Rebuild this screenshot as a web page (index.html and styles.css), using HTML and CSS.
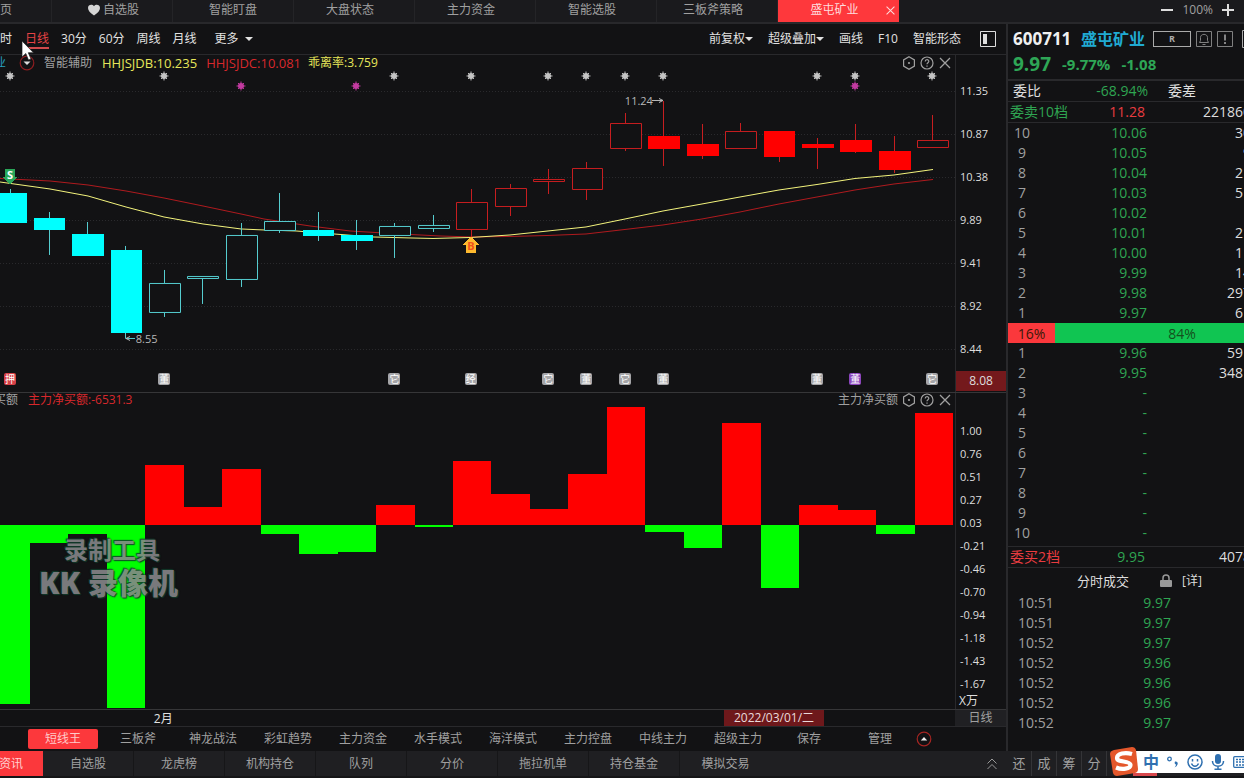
FILE: index.html
```html
<!DOCTYPE html>
<html lang="zh-CN">
<head>
<meta charset="utf-8">
<title>盛屯矿业 600711</title>
<link rel="stylesheet" href="styles.css">
</head>
<body>
<svg class="defs" aria-hidden="true">
  <symbol id="star" viewBox="-5 -5 10 10"><path d="M0-4.500V4.500M-4.500 0H4.500M-3-3L3 3M3-3L-3 3" stroke="currentColor" stroke-width="1"/><circle r="3" fill="currentColor"/></symbol>
  <symbol id="hex" viewBox="0 0 14 14"><path d="M7 .8l5.400 3.100v6.200L7 13.200 1.600 10.100V3.900z" fill="none" stroke="currentColor" stroke-width="1.200"/><circle cx="7" cy="7" r="1.100" fill="currentColor"/></symbol>
  <symbol id="help" viewBox="0 0 14 14"><circle cx="7" cy="7" r="6" fill="none" stroke="currentColor" stroke-width="1.200"/><path d="M5.200 5.600C5.200 3 8.900 3.200 8.800 5.400 8.700 6.700 7 6.700 7 8.300M7 9.500v1.300" fill="none" stroke="currentColor" stroke-width="1.200"/></symbol>
  <symbol id="cross" viewBox="0 0 14 14"><path d="M2 2l10 10M12 2L2 12" fill="none" stroke="currentColor" stroke-width="1.300"/></symbol>
</svg>

<header class="tabs">
  <nav class="tab-list">
    <a class="tab first" href="#">页</a>
    <a class="tab favourites" href="#"><svg class="heart" viewBox="0 0 12 12"><path d="M6 11.500C2 8.500 0 6.500 0 3.900 0 .6 4.300-.2 6 2.300 7.700-.2 12 .6 12 3.900 12 6.500 10 8.500 6 11.500z" fill="#d5d5d5"/></svg>自选股</a>
    <a class="tab" href="#">智能盯盘</a>
    <a class="tab closable" href="#">大盘状态</a>
    <a class="tab closable" href="#">主力资金</a>
    <a class="tab closable" href="#">智能选股</a>
    <a class="tab closable" href="#">三板斧策略</a>
    <a class="tab closable active" href="#">盛屯矿业<svg class="tab-close" viewBox="0 0 14 14"><use href="#cross"/></svg></a>
  </nav>
  <div class="zoom">
    <button aria-label="缩小"><svg width="12" height="12"><path d="M0 6H12" stroke="#ddd" stroke-width="2"/></svg></button>
    <span>100%</span>
    <button aria-label="放大"><svg width="12" height="12"><path d="M0 6H12M6 0V12" stroke="#ddd" stroke-width="2"/></svg></button>
  </div>
</header>

<main class="workspace">
  <section class="chart">
    <div class="toolbar">
      <div class="periods">
        <button>时</button>
        <button class="current">日线</button>
        <button>30分</button>
        <button>60分</button>
        <button>周线</button>
        <button>月线</button>
        <button class="more">更多<i class="caret"></i></button>
      </div>
      <div class="tools">
        <button>前复权<i class="caret"></i></button>
        <button>超级叠加<i class="caret"></i></button>
        <button>画线</button>
        <button>F10</button>
        <button>智能形态</button>
        <button class="dock" aria-label="侧栏"><svg width="16" height="16"><path d="M.5.5H15.500V15.500H.5z" fill="none" stroke="#ddd"/><path d="M3 3H7V13H3z" fill="#ddd"/></svg></button>
      </div>
      <svg class="cursor" viewBox="0 0 12 20"><path d="M0 0V16L3.800 12.500 6.500 19 9 18 6.300 11.700H11.500z" fill="#fff" stroke="#222" stroke-width=".7"/></svg>
    </div>

    <div class="pane pane-price">
      <div class="plot">
        <svg class="drawing" viewBox="0 55 955 337" preserveAspectRatio="none">
          <path class="grid" d="M0 91.500H955M0 134.500H955M0 177.500H955M0 220.500H955M0 263.500H955M0 306.500H955M0 349.500H955"/>
          <path class="ma-slow" d="M0 178.500L50 181 88 185 126 191 164 198 203 206 241 214 264 219 310 226 350 231 400 234 440 236 471 237 510 236.500 548 235.500 586 234 625 229.500 663 225 702 219 740 212 779 204 817 197 855 190 894 184 933 179.500"/>
          <path class="ma-fast" d="M0 182L50 189 88 196 126 207 164 217 203 224 241 229 264 230 296 231 334 234 373 237 411 238 433 238.500 471 237.500 510 235 548 231 586 227 625 219 663 211 702 204 740 197 779 190 817 184.500 855 178.500 894 175 933 169.500"/>
          <g class="down">
            <path d="M10.500 189V193M49.500 212V255M87.500 222V234M125.500 246V338.500H135M164.500 270V283M164.500 313V317M202.500 279V304M241.500 223V235M241.500 280V287M279.500 193V221M279.500 231V233M318.500 212V241M356.500 220V250M394.500 223V226M394.500 236V258M433.500 215V225M433.500 228V232"/>
            <path class="solid" d="M0 193H27V223H0zM34 218H65V230H34zM72 234H104V256H72zM111 250H142V333H111zM303 230H334V236H303zM341 235H373V241H341z"/>
            <path class="hollow" d="M149.500 283.500H180.500V312.500H149.500zM187.500 276.500H218.500V278.500H187.500zM226.500 235.500H257.500V279.500H226.500zM264.500 221.500H295.500V230.500H264.500zM379.500 226.500H410.500V235.500H379.500zM418.500 225.500H449.500V228.500H418.500z"/>
          </g>
          <g class="up">
            <path d="M471.500 189V202M471.500 230V238M510.500 184V188M510.500 207V216M548.500 169V194M586.500 162V168M586.500 190V200M625.500 113V123M625.500 149V151M663.500 101V166M702.500 124V159M740.500 123V131M779.500 131V162M817.500 138V169M855.500 124V153M894.500 136V173M932.500 115V140"/>
            <path class="solid" d="M648 136H680V149H648zM687 144H719V156H687zM764 131H795V157H764zM802 144H834V148H802zM840 140H872V152H840zM879 151H911V170H879z"/>
            <path class="hollow" d="M456.500 202.500H487.500V229.500H456.500zM495.500 188.500H526.500V206.500H495.500zM533.500 179.500H564.500V181.500H533.500zM572.500 168.500H602.500V189.500H572.500zM610.500 123.500H641.500V148.500H610.500zM725.500 131.500H756.500V148.500H725.500zM917.500 140.500H948.500V147.500H917.500z"/>
          </g>
          <path d="M130 336.500L126 338.500 130 340.500M652 100.500H663M659 98.500L663 100.500 659 102.500" fill="none" stroke="#bbb"/>
          <path d="M5 169H15V177H18L10 184 2 177H5z" fill="#2aa75a"/>
          <path d="M471 237L479 245H476V253H466V245H463z" fill="#fdb92e"/>
          <g color="#c4c4c4">
            <use href="#star" x="5" y="71" width="10" height="10"/><use href="#star" x="159" y="71" width="10" height="10"/><use href="#star" x="389" y="71" width="10" height="10"/><use href="#star" x="466" y="71" width="10" height="10"/><use href="#star" x="543" y="71" width="10" height="10"/><use href="#star" x="581" y="71" width="10" height="10"/><use href="#star" x="620" y="71" width="10" height="10"/><use href="#star" x="658" y="71" width="10" height="10"/><use href="#star" x="812" y="71" width="10" height="10"/><use href="#star" x="850" y="71" width="10" height="10"/><use href="#star" x="927" y="71" width="10" height="10"/>
          </g>
          <g color="#c23aa0">
            <use href="#star" x="236" y="81" width="10" height="10"/><use href="#star" x="351" y="81" width="10" height="10"/><use href="#star" x="850" y="81" width="10" height="10"/>
          </g>
        </svg>
        <div class="legend">
          <span class="stock-name">盛屯矿业</span>
          <svg class="round-caret" viewBox="0 0 16 16"><circle cx="8" cy="8" r="6.800" fill="none" stroke="#8d1d20" stroke-width="1.200"/><path d="M4.500 6.500H11.500L8 10z" fill="#ddd"/></svg>
          <span>智能辅助</span>
          <span class="series yellow">HHJSJDB:10.235</span>
          <span class="series red">HHJSJDC:10.081</span>
          <span class="yellow">乖离率:3.759</span>
          <span class="pane-tools">
            <button aria-label="设置"><svg><use href="#hex"/></svg></button><button aria-label="帮助"><svg><use href="#help"/></svg></button><button aria-label="关闭"><svg><use href="#cross"/></svg></button>
          </span>
        </div>
        <span class="mark" style="left:66.900%;top:13.600%"><b class="extreme high">11.24</b></span>
        <span class="mark" style="left:14.200%;top:84.400%"><b class="extreme low">8.55</b></span>
        <span class="mark" style="left:1.050%;top:35.600%"><b class="signal sell">S</b></span>
        <span class="mark" style="left:49.300%;top:56.800%"><b class="signal buy">B</b></span>
        <span class="mark" style="left:1.050%;top:96.100%"><b class="event pledge">押</b></span>
        <span class="mark" style="left:17.200%;top:96.100%"><b class="event">董</b></span>
        <span class="mark" style="left:41.300%;top:96.100%"><b class="event">它</b></span>
        <span class="mark" style="left:49.300%;top:96.100%"><b class="event">经</b></span>
        <span class="mark" style="left:57.400%;top:96.100%"><b class="event">它</b></span>
        <span class="mark" style="left:61.400%;top:96.100%"><b class="event">董</b></span>
        <span class="mark" style="left:65.450%;top:96.100%"><b class="event">它</b></span>
        <span class="mark" style="left:69.450%;top:96.100%"><b class="event">董</b></span>
        <span class="mark" style="left:85.550%;top:96.100%"><b class="event">董</b></span>
        <span class="mark" style="left:89.550%;top:96.100%"><b class="event special">董</b></span>
        <span class="mark" style="left:97.600%;top:96.100%"><b class="event">它</b></span>
      </div>
      <ul class="axis price-axis">
        <li>11.35</li><li>10.87</li><li>10.38</li><li>9.89</li><li>9.41</li><li>8.92</li><li>8.44</li>
        <li class="cursor-price">8.08</li>
      </ul>
    </div>

    <div class="pane pane-flow">
      <div class="plot">
        <svg class="drawing" viewBox="0 393 955 316" preserveAspectRatio="none">
          <path fill="#f00" d="M145 525V465H184V507H222V469H261V525zM376 525V505H415V525zM453 525V461H491V494H530V509H568V474H607V407H645V525zM722 525V423H761V525zM799 525V505H838V510H876V525zM915 525V413H953V525z"/>
          <path fill="#0f0" d="M0 525V704H30V543H68V534H107V708H145V525zM261 525V534H299V554H338V552H376V525zM415 525V527H453V525zM645 525V532H684V548H722V525zM761 525V588H799V525zM876 525V534H915V525z"/>
        </svg>
        <div class="legend">
          <span class="clipped">买额</span>
          <span class="red">主力净买额:-6531.3</span>
          <span class="pane-tools">
            <span>主力净买额</span><button aria-label="设置"><svg><use href="#hex"/></svg></button><button aria-label="帮助"><svg><use href="#help"/></svg></button><button aria-label="关闭"><svg><use href="#cross"/></svg></button>
          </span>
        </div>
        <div class="watermark"><span>录制工具</span><strong>KK 录像机</strong></div>
      </div>
      <ul class="axis flow-axis">
        <li>1.00</li><li>0.76</li><li>0.51</li><li>0.27</li><li>0.03</li><li>-0.21</li><li>-0.46</li><li>-0.70</li><li>-0.94</li><li>-1.18</li><li>-1.43</li><li>-1.67</li>
        <li class="unit">X万</li>
      </ul>
    </div>

    <div class="dates">
      <div class="plot">
        <span class="mark" style="left:17.100%;top:50%"><b class="month">2月</b></span>
        <span class="mark" style="left:81.050%;top:50%"><b class="day">2022/03/01/二</b></span>
      </div>
      <span class="period">日线</span>
    </div>

    <nav class="strategies">
      <button class="selected">短线王</button>
      <button>三板斧</button>
      <button>神龙战法</button>
      <button>彩虹趋势</button>
      <button>主力资金</button>
      <button>水手模式</button>
      <button>海洋模式</button>
      <button>主力控盘</button>
      <button>中线主力</button>
      <button>超级主力</button>
      <button class="save">保存</button>
      <button>管理</button>
      <button class="collapse" aria-label="收起"><svg class="round-caret" viewBox="0 0 16 16"><circle cx="8" cy="8" r="6.800" fill="none" stroke="#a62522" stroke-width="1.200"/><path d="M4.800 9.500H11.200L8 6z" fill="#eee"/></svg></button>
    </nav>
  </section>

  <aside class="quote">
    <div class="quote-head">
      <div class="title">
        <strong class="code">600711</strong>
        <strong class="name">盛屯矿业</strong>
        <button class="tag">R</button>
        <button class="square" aria-label="提醒"><svg width="16" height="16" fill="none" stroke="#808080"><path d="M.5.5H15.500V15.500H.5z"/><path d="M3.500 11.500H12.500L11.500 9.500V6.500C11.500 2.300 4.500 2.300 4.500 6.500V9.500zM6.500 13.500H9.500"/></svg></button>
        <button class="square" aria-label="公告"><svg width="16" height="16" fill="none" stroke="#808080"><path d="M.5.5H15.500V15.500H.5z"/><path d="M8 3.500V9.500M8 11V13" stroke="#aaa" stroke-width="1.500"/></svg></button>
        <button class="square edge" aria-label="更多"><svg width="16" height="18"><path d="M.5.5H15.500V17.500H.5z" fill="none" stroke="#aaa"/></svg></button>
      </div>
      <div class="price"><strong>9.97</strong><b>-9.77%</b><b>-1.08</b></div>
    </div>
    <div class="summary"><span>委比</span><span class="green">-68.94%</span><span class="diff">委差</span></div>
    <div class="summary total"><span class="green">委卖10档</span><span class="red">11.28</span><span class="volume">221860</span></div>
    <table class="book">
      <tr><th>10</th><td>10.06</td><td>30</td></tr>
      <tr><th>9</th><td>10.05</td><td>9</td></tr>
      <tr><th>8</th><td>10.04</td><td>21</td></tr>
      <tr><th>7</th><td>10.03</td><td>51</td></tr>
      <tr><th>6</th><td>10.02</td><td></td></tr>
      <tr><th>5</th><td>10.01</td><td>21</td></tr>
      <tr><th>4</th><td>10.00</td><td>11</td></tr>
      <tr><th>3</th><td>9.99</td><td>14</td></tr>
      <tr><th>2</th><td>9.98</td><td>297</td></tr>
      <tr><th>1</th><td>9.97</td><td>61</td></tr>
    </table>
    <div class="ratio"><span class="sell-share">16%</span><span class="buy-share">84%</span></div>
    <table class="book">
      <tr><th>1</th><td>9.96</td><td>591</td></tr>
      <tr><th>2</th><td>9.95</td><td>3481</td></tr>
      <tr><th>3</th><td>-</td><td></td></tr>
      <tr><th>4</th><td>-</td><td></td></tr>
      <tr><th>5</th><td>-</td><td></td></tr>
      <tr><th>6</th><td>-</td><td></td></tr>
      <tr><th>7</th><td>-</td><td></td></tr>
      <tr><th>8</th><td>-</td><td></td></tr>
      <tr><th>9</th><td>-</td><td></td></tr>
      <tr><th>10</th><td>-</td><td></td></tr>
    </table>
    <div class="summary total bids"><span class="red">委买2档</span><span class="green">9.95</span><span class="volume">4078</span></div>
    <div class="ticks-head">
      <span>分时成交</span>
      <svg width="12" height="14" viewBox="0 0 12 14"><path d="M3 7V4C3 0 9 0 9 4V7" fill="none" stroke="#999" stroke-width="1.500"/><rect y="6" width="12" height="7" rx="1" fill="#999"/></svg>
      <a href="#">[详]</a>
    </div>
    <table class="ticks">
      <tr><td>10:51</td><td>9.97</td></tr>
      <tr><td>10:51</td><td>9.97</td></tr>
      <tr><td>10:52</td><td>9.97</td></tr>
      <tr><td>10:52</td><td>9.96</td></tr>
      <tr><td>10:52</td><td>9.96</td></tr>
      <tr><td>10:52</td><td>9.96</td></tr>
      <tr><td>10:52</td><td>9.97</td></tr>
    </table>
  </aside>
</main>

<footer class="bottom">
  <nav class="bottom-nav">
    <a class="news" href="#">资讯</a>
    <a href="#">自选股</a>
    <a href="#">龙虎榜</a>
    <a href="#">机构持仓</a>
    <a href="#">队列</a>
    <a href="#">分价</a>
    <a href="#">拖拉机单</a>
    <a href="#">持仓基金</a>
    <a href="#">模拟交易</a>
  </nav>
  <button class="expand" aria-label="展开"><svg width="10" height="12" fill="none" stroke="#999"><path d="M.5 5.500L5 1 9.500 5.500M.5 11L5 6.500 9.500 11"/></svg></button>
  <nav class="side-nav">
    <a href="#">还</a><a href="#">成</a><a href="#">筹</a><a href="#">分</a>
  </nav>
  <div class="ime">
    <svg class="ime-logo" viewBox="0 0 28 30"><path d="M4 3L22 0Q25 0 26 3L28 22Q28 25 25 26L7 29Q4 29 3 26L0 7Q0 4 4 3z" fill="#e4572b"/><path d="M22 7C15 5 7 6.500 7 11 7 16 20 13 20.500 18 20.500 22 12 23 6 20.500" fill="none" stroke="#fff" stroke-width="4.200"/></svg>
    <div class="ime-bar">
      <b>中</b>
      <svg width="12" height="14"><circle cx="2.500" cy="4" r="1.800" fill="none" stroke="#2f70b0" stroke-width="1.300"/><path d="M8 6.500Q11.500 6 10.500 9.500 10 11.500 7.500 12.500 9 11 9 9.500 7 9 8 6.500z" fill="#2f70b0"/></svg>
      <svg width="16" height="16" fill="none" stroke="#2f70b0" stroke-width="1.500"><circle cx="8" cy="8" r="7"/><path d="M4.500 9.500C6 13 10 13 11.500 9.500M5.500 5V7.500M10.500 5V7.500"/></svg>
      <svg width="14" height="16"><rect x="4" width="6" height="10" rx="3" fill="#2f70b0"/><path d="M1.500 7C1.500 14 12.500 14 12.500 7M7 12V15M3.500 15.200H10.500" fill="none" stroke="#2f70b0" stroke-width="1.500"/></svg>
      <svg width="18" height="12"><rect x=".7" y=".7" width="16.600" height="10.600" rx="1" fill="none" stroke="#2f70b0" stroke-width="1.300"/><path d="M3 3.500H15M3 6H15M3 9H15" stroke="#2f70b0" stroke-width="1.500" stroke-dasharray="2 1"/></svg>
    </div>
    <i class="ime-underline"></i>
  </div>
</footer>
</body>
</html>
```

FILE: styles.css
```css
* { box-sizing: border-box; }

body {
  margin: 0;
  min-height: 100vh;
  display: flex;
  flex-direction: column;
  background: #121214;
  color: #a0a0a0;
  font: 12px/16px "Open Sans", "Noto Sans CJK SC", sans-serif;
  white-space: nowrap;
  overflow: hidden;
}

button {
  padding: 0;
  border: 0;
  background: none;
  color: inherit;
  font: inherit;
}

a { color: inherit; text-decoration: none; }
ul { margin: 0; padding: 0; list-style: none; }
svg { display: block; }
.defs { position: absolute; width: 0; height: 0; }
.red { color: #d8282c; }
.green { color: #2fa552; }
.yellow { color: #e6e65a; }

/* Top tabs */
.tabs {
  display: flex;
  justify-content: space-between;
  height: 24px;
  background: #1a1a1d;
  border-bottom: 2px solid #28282b;
}
.tab-list { display: flex; }
.tab {
  position: relative;
  display: flex;
  align-items: center;
  justify-content: center;
  gap: 3px;
  width: 121px;
  padding-bottom: 3px;
  border-right: 1px solid #242427;
}
.tab.first { width: 52px; justify-content: flex-start; }
.tab.favourites { padding-left: 3px; }
.tab.closable { padding-right: 8px; }
.tab.active { background: #fe383c; color: #ffdcdc; border: 0; }
.heart { width: 12px; height: 12px; }
.tab-close { position: absolute; right: 3px; top: 5px; width: 11px; height: 11px; }
.zoom { display: flex; align-items: center; gap: 9px; padding: 0 10px 3px; }

/* Workspace */
.workspace { flex: 1; display: flex; min-height: 0; }
.chart { flex: 1; min-width: 0; display: flex; flex-direction: column; }

.toolbar {
  position: relative;
  display: flex;
  justify-content: space-between;
  align-items: center;
  height: 31px;
  padding-right: 10px;
  border-bottom: 1px solid #29292c;
  color: #e2e2e2;
}
.periods, .tools { display: flex; align-items: center; }
.periods { gap: 12px; }
.tools { gap: 15px; }
.toolbar button { display: flex; align-items: center; height: 22px; }
.toolbar .dock { margin-left: 4px; }
.periods .current { margin-left: 1px; color: #e64245; box-shadow: 0 2px #cf4a4c, 5px 2px #cf4a4c; background: #121214; }
.more { margin-left: 6px; gap: 6px; }
.caret { border: 4px solid transparent; border-top-color: #e2e2e2; border-bottom: 0; }
.cursor { position: absolute; left: 22px; top: 17px; width: 12px; height: 20px; z-index: 2; }
.periods .current { height: 20px; box-shadow: none; border-bottom: 2px solid #cf4a4c; border-top: 2px solid transparent; }

.pane { display: flex; min-height: 0; border-bottom: 1px solid #363638; }
.pane-price { flex: 338 1 0; }
.pane-flow { flex: 317 1 0; }
.plot { position: relative; flex: 1; min-width: 0; }
.drawing { position: absolute; inset: 0; width: 100%; height: 100%; shape-rendering: crispEdges; }
.drawing use { shape-rendering: auto; }
.grid { stroke: #2b2b2e; stroke-dasharray: 1 2; }
.ma-slow { fill: none; stroke: #b01a1e; }
.ma-fast { fill: none; stroke: #f4f47c; }
.down { fill: none; stroke: #55cdd0; }
.down .solid { fill: #0ff; stroke: none; }
.up { fill: none; stroke: #c81e20; }
.up .solid { fill: #f00; stroke: none; }
.down .hollow, .up .hollow { fill: #121214; }

.legend { position: relative; display: flex; align-items: center; gap: 10px; height: 16px; }
.pane-flow .legend { height: 14px; }
.stock-name { width: 6px; direction: rtl; overflow: hidden; color: #27a0c0; }
.round-caret { width: 16px; height: 16px; }
.legend .round-caret { margin: 0 -1px 0 3px; }
.series { font-size: 13px; }
.series.yellow { margin-right: -1px; }
.series.red { margin-right: -3px; }
.clipped { width: 18px; direction: rtl; overflow: hidden; }
.pane-tools { display: flex; align-items: center; gap: 4px; margin-left: auto; padding-right: 3px; }
.pane-tools svg { width: 14px; height: 14px; }

/* Zero-size anchors placed at a data point, with a centred label */
.mark { position: absolute; display: flex; align-items: center; justify-content: center; width: 0; height: 0; }
.mark b { flex: none; font-weight: 400; }
.extreme { color: #b8b8b8; font-size: 11px; }
.extreme.low { padding-left: 22px; }
.signal { font-size: 11px; }
.mark .signal { font-weight: 700; }
.signal.sell { color: #fff; }
.signal.buy { color: #f0501c; }
.event { width: 12px; height: 12px; border-radius: 2px; background: #a5a5a8; color: #fff; font-size: 10px; line-height: 12px; text-align: center; overflow: hidden; }
.event.pledge { background: #d64046; }
.event.special { background: #8b46bd; }

.axis { display: flex; flex-direction: column; width: 51px; border-left: 1px solid #29292c; color: #dedede; font-size: 11px; }
.axis li { padding-left: 4px; }
.price-axis { padding-top: 14px; }
.price-axis li { line-height: 43px; }
.price-axis .cursor-price { margin: auto 0 1px; padding: 0; background: #74191c; text-align: center; font-size: 12px; line-height: 20px; }
.flow-axis { padding-top: 26px; }
.flow-axis li { line-height: 23px; }
.flow-axis .unit { font-size: 12px; line-height: 12px; padding-left: 3px; }

.watermark {
  position: absolute;
  left: 39px;
  top: 140px;
  display: flex;
  flex-direction: column;
  color: #858588;
  font-weight: 700;
  text-shadow: 0 0 2px #123d2c, 1px 1px 1px #123d2c, -1px -1px 1px #123d2c;
  opacity: .9;
}
.watermark span { padding-left: 25px; font-size: 24px; line-height: 34px; }
.watermark strong { font-size: 30px; line-height: 32px; }

.dates { display: flex; height: 17px; border-bottom: 1px solid #29292c; }
.month { padding-top: 2px; color: #e2e2e2; }
.day { width: 100px; background: #6e181b; color: #eadada; text-align: center; }
.period { width: 51px; background: #202023; text-align: center; }

.strategies { display: flex; align-items: center; gap: 5px; height: 24px; padding-left: 28px; }
.strategies button { width: 70px; height: 20px; }
.strategies .selected { border-radius: 2px; background: #fc383c; color: #ffcaca; }
.strategies .save { width: 62px; }
.strategies .collapse { width: 16px; height: 16px; margin-left: -4px; }

/* Quote panel */
.quote { width: 238px; border-left: 2px solid #29292c; overflow: hidden; font-size: 14px; line-height: 20px; }
.quote-head { height: 57px; border-bottom: 2px solid #29292c; }
.title { display: flex; align-items: center; height: 30px; padding-left: 5px; }
.code { flex: none; width: 68px; color: #f0f0f0; font-size: 17px; }
.name { flex: none; width: 72px; color: #20aad2; font-size: 16px; }
.tag { flex: none; width: 38px; height: 16px; margin-right: 5px; border: 1px solid #aaa; color: #aaa; font-size: 9px; font-weight: 700; line-height: 14px; }
.square { flex: none; margin-right: 5px; }
.edge { margin-left: 4px; }
.price { display: flex; align-items: center; gap: 11px; padding-left: 5px; color: #2ea656; font-size: 15px; }
.price strong { font-size: 19px; }

.summary { display: grid; grid-template-columns: 60px 75px 1fr; height: 21px; padding-left: 5px; border-bottom: 1px solid #29292c; color: #dedede; }
.summary span:nth-child(2) { text-align: right; }
.summary .diff { padding-left: 20px; }
.total { padding-left: 2px; margin-right: -7px; }
.total .red { color: #e83c40; }
.total .green { color: #2fa552; }
.volume { text-align: right; }

.book { width: calc(100% + 7px); table-layout: fixed; border-collapse: collapse; }
.book th, .book td { height: 20px; padding: 0; text-align: right; font-weight: 400; }
.book th { width: 28px; text-align: center; }
.book td:nth-child(2) { width: 111px; color: #2fa552; }
.book td:nth-child(3) { color: #dedede; }
.ratio { display: flex; height: 20px; color: #3a1a08; }
.sell-share { width: 20%; background: #fb383c; text-align: center; }
.buy-share { width: 80%; padding-left: 65px; background: #10c552; color: #14501c; text-align: center; }
.sell-share, .buy-share { line-height: 21px; }
.bids { height: 22px; margin-top: 3px; border-top: 1px solid #29292c; }
.ticks-head { display: flex; align-items: center; height: 25px; padding-left: 69px; color: #dedede; font-size: 13px; }
.ticks-head svg { margin: 0 10px 0 31px; }
.ticks-head a { font-size: 12px; }
.ticks { width: 163px; border-collapse: collapse; }
.ticks td { height: 20px; padding: 0 0 0 10px; }
.ticks td:last-child { padding: 0; color: #2fa552; text-align: right; }

/* Bottom bar */
.bottom { display: flex; height: 27px; background: #1f1f22; border-bottom: 2px solid #151517; }
.bottom-nav { display: flex; flex: 1; }
.bottom-nav a { width: 91px; border-right: 1px solid #161618; text-align: center; line-height: 25px; }
.bottom-nav a:last-child { border: 0; }
.bottom-nav .news { width: 43px; padding-right: 20px; direction: rtl; overflow: hidden; border: 0; background: #fb383c; color: #ffd2d2; }
.expand { margin-right: 10px; }
.side-nav { display: flex; }
.side-nav a { width: 25px; border-right: 1px solid #343437; text-align: center; font-size: 13px; line-height: 25px; }
.ime { position: relative; display: flex; width: 137px; padding-left: 28px; }
.ime-logo { position: absolute; left: 3px; top: -4px; width: 28px; height: 30px; }
.ime-bar { display: flex; align-items: center; gap: 8px; width: 109px; height: 22px; padding-left: 8px; background: #fff; color: #2f70b0; overflow: hidden; }
.ime-bar b { font-size: 16px; }
.ime-bar svg { flex: none; }
.ime-underline { position: absolute; left: 26px; bottom: 0; width: 24px; height: 3px; background: #d8484c; }
```
